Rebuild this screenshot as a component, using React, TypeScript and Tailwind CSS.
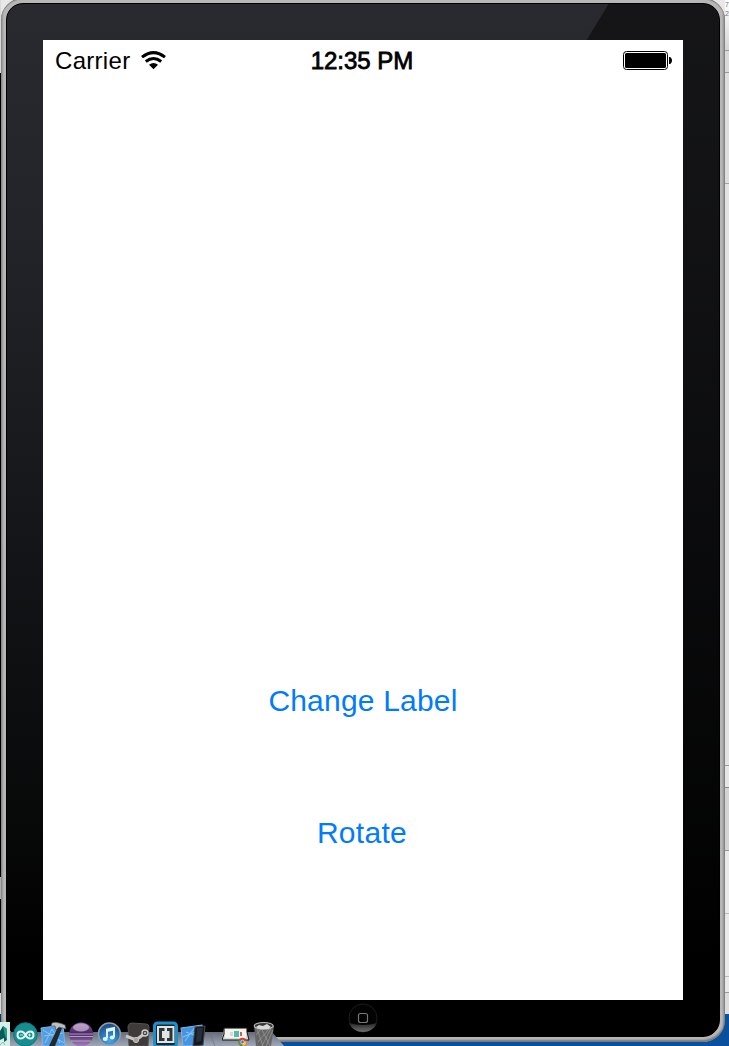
import type { ReactNode } from "react";

function StatusBar() {
  return (
    <header className="grid h-10 grid-cols-3 items-start pl-3 pr-[11px] pt-[1px] text-[24px] leading-10 text-black">
      <div className="flex items-start gap-[11px]">
        <span className="tracking-[0.3px]">Carrier</span>
        <svg className="mt-[10px] h-[19px] w-[25px]" viewBox="0 0 25 19" fill="none" stroke="black">
          <path d="M1 6.2Q12.5-3 24 6.2" strokeWidth="3" />
          <path d="M4.8 10.5Q12.5 4.5 20.2 10.5" strokeWidth="3" />
          <path d="M8 13.8Q12.5 10.2 17 13.8L12.5 18.3Z" fill="black" stroke="none" />
        </svg>
      </div>
      <span className="whitespace-nowrap pr-[3px] text-center [-webkit-text-stroke:0.8px_black]">12:35 PM</span>
      <svg className="mt-[10px] h-[19px] w-[49px] justify-self-end" viewBox="0 0 49 19">
        <rect x="0.5" y="0.5" width="44" height="18" rx="3" fill="white" stroke="black" />
        <rect x="2" y="2" width="41" height="15" rx="1.5" fill="black" />
        <path d="M46 6h1.2c1 1 1.8 2 1.8 3.5S48.2 12 47.2 13H46z" fill="black" />
      </svg>
    </header>
  );
}

function HomeButton() {
  return (
    <svg className="size-[30px]" viewBox="0 0 30 30">
      <defs>
        <linearGradient id="homeShine" x1="0" y1="0" x2="0" y2="1">
          <stop stopColor="#242424" />
          <stop offset="1" stopColor="#707070" />
        </linearGradient>
      </defs>
      <circle cx="15" cy="15" r="14" fill="#030303" stroke="#1c1c1c" />
      <path d="M1 20Q15 24 29 20C24 32 6 32 1 20Z" fill="url(#homeShine)" />
      <rect x="10.5" y="10.5" width="9" height="9" rx="2" fill="none" stroke="#777" strokeWidth="1.2" />
    </svg>
  );
}

function DockIcon({ width, children }: { width: string; children: ReactNode }) {
  return (
    <svg className={`h-[25px] shrink-0 ${width}`} viewBox="0 0 28 25" preserveAspectRatio="xMinYMin slice">
      {children}
    </svg>
  );
}

function Dock() {
  return (
    <div className="absolute bottom-0 left-0 h-[25px] w-[284px]">
      <svg className="absolute inset-0 h-[25px] w-[284px]" viewBox="0 0 284 25">
        <defs>
          <linearGradient id="shelf" x1="0" y1="0" x2="0" y2="1">
            <stop stopColor="#666b77" />
            <stop offset="1" stopColor="#a0a8b8" />
          </linearGradient>
        </defs>
        <path d="M0 11H272L284 25H0Z" fill="url(#shelf)" />
        <path d="M211 15L215 25" stroke="#606875" strokeDasharray="1 1" />
      </svg>
      <div className="relative flex">
        <DockIcon width="w-[12px]">
          <rect width="10" height="25" y="1" fill="#d7efeb" />
          <path d="M0 10L3 5L7 8V19L4 21V17L0 19Z" fill="#075d55" />
          <path d="M3 5L7 8V19L5 15Z" fill="#27998b" />
          <path d="M0 24L3 21L5 24" stroke="#8db9b2" fill="none" />
        </DockIcon>
        <DockIcon width="w-[28px]">
          <circle cx="13.4" cy="13.5" r="11.8" fill="#138e91" stroke="#0b797e" />
          <path d="M13.5 14C11 9 5.5 9.5 5.5 14s5.5 5 8 0 8-4.5 8 0-5.5 5-8 0Z" fill="none" stroke="#e4f5ef" strokeWidth="2" />
          <path d="M8 14h3M16 14h3M17.5 12.5v3" stroke="#c6efe5" />
        </DockIcon>
        <DockIcon width="w-[28px]">
          <path d="M1 7L23 4L25 25H3Z" fill="#529de2" stroke="#75b8f0" />
          <path d="M5 22L12 8L20 22M4 15L23 12M3 9L24 22" stroke="#86c4f5" fill="none" />
          <path d="M18 6L22 7L15 25H9Z" fill="#22282c" />
          <path d="M12 2Q16 0 25 4L26 8L19 6L16 9L15 5L11 5Z" fill="#bbc0c2" stroke="#4b5051" strokeWidth=".7" />
        </DockIcon>
        <DockIcon width="w-[28px]">
          <defs>
            <linearGradient id="eclipse" x1="0" y1="0" x2="0" y2="1">
              <stop stopColor="#8a5fa3" />
              <stop offset=".45" stopColor="#482663" />
              <stop offset="1" stopColor="#a583bd" />
            </linearGradient>
          </defs>
          <circle cx="13.2" cy="13.5" r="12" fill="url(#eclipse)" />
          <path d="M1.5 13H25M1.5 15.5H25M3 20H23" stroke="#d4bce0" strokeWidth="1" opacity=".75" />
          <ellipse cx="13" cy="6.5" rx="8" ry="4" fill="#e2cfe9" opacity=".6" />
        </DockIcon>
        <DockIcon width="w-[28px]">
          <defs>
            <radialGradient id="music" cx=".5" cy=".8" r=".8">
              <stop stopColor="#45a8e9" />
              <stop offset="1" stopColor="#194580" />
            </radialGradient>
          </defs>
          <circle cx="13.4" cy="13" r="11" fill="url(#music)" stroke="#909da9" strokeWidth="1.5" />
          <path d="M11 17V8.5L18 7V16" fill="none" stroke="#dcf4ff" strokeWidth="2" />
          <path d="M11 8.5L18 7V9.5L11 11Z" fill="#dcf4ff" />
          <ellipse cx="9.2" cy="18" rx="2.5" ry="2" fill="#dcf4ff" />
          <ellipse cx="16.2" cy="16.5" rx="2.4" ry="2" fill="#dcf4ff" />
        </DockIcon>
        <DockIcon width="w-[28px]">
          <path d="M4 5Q5 2 8 2L22 3Q25 3 25 6L24 25H5Z" fill="#3e3b3a" stroke="#56514f" />
          <path d="M2 15L12 19L20 13" stroke="#c7c6c3" strokeWidth="3" fill="none" />
          <circle cx="21" cy="12" r="3" fill="#4a4847" stroke="#d0cfcc" strokeWidth="1.3" />
          <circle cx="21" cy="12" r="1" fill="#d0cfcc" />
          <circle cx="12" cy="19" r="2.6" fill="#a5a29f" stroke="#c4c2bf" strokeWidth="1" />
        </DockIcon>
        <DockIcon width="w-[28px]">
          <rect x="2.5" y="2" width="22" height="23.5" rx="3" fill="#20262a" stroke="#1991cf" strokeWidth="3" />
          <rect x="5" y="5" width="17.5" height="17" fill="#e0e4e4" />
          <path d="M12.5 7H7V20H12.5V17H10V10H12.5ZM15 7H20.5V20H15V17H17.5V10H15Z" fill="#303537" />
        </DockIcon>
        <DockIcon width="w-[42px]">
          <g transform="scale(.667)">
            <path d="M1 7L22 4L24 24L3 25Z" fill="#4394e1" stroke="#79b9ef" />
            <path d="M5 20L15 6M6 11L22 17M3 16L20 9" stroke="#82c2f3" fill="none" />
            <path d="M15 6L25 5L23 24L13 25Z" fill="#15171c" stroke="#434750" />
            <path d="M17 7L23 7L21 20L16 21Z" fill="#282e38" />
          </g>
        </DockIcon>
        <DockIcon width="w-[28px]">
          <path d="M2 7H25V18H0Z" fill="#d5d8d3" />
          <path d="M2 7H25V11L27 19H0L2 13Z" fill="#d5d8d3" stroke="#151515" />
          <rect x="3" y="8" width="21" height="9" fill="#f4f4ef" />
          <path d="M12 10H17V16H12Z" fill="#54bca9" />
          <path d="M18 11H20V15H18Z" fill="#d65e4d" />
          <path d="M11 12H8M11 14H8" stroke="#b8c0bc" />
          <circle cx="20.5" cy="21" r="4.2" fill="#d63c2f" />
          <path d="M20.5 21L17 19A4.2 4.2 0 0 0 20.5 25Z" fill="#37a950" />
          <path d="M20.5 21L24.5 20A4.2 4.2 0 0 1 20.5 25Z" fill="#f1c52e" />
          <circle cx="20.5" cy="21" r="1.8" fill="#367bda" stroke="white" strokeWidth=".6" />
        </DockIcon>
        <DockIcon width="w-[28px]">
          <path d="M4 5L6 25H21L24 5Z" fill="#666" />
          <path d="M7 8L13 25M11 7L20 25M21 7L12 25M23 9L16 25M6 14L12 7M8 21L19 8" stroke="#a5a5a5" strokeWidth=".6" />
          <ellipse cx="13.7" cy="4.8" rx="9.5" ry="3.3" fill="#353535" stroke="#bcbcbc" strokeWidth="1.2" />
          <path d="M6 6L9 4L13 5L17 3L21 6L18 8L9 8Z" fill="#d7d7d7" />
        </DockIcon>
      </div>
    </div>
  );
}

function Desktop({ children }: { children: ReactNode }) {
  return (
    <div className="relative flex h-[1046px] w-[729px] overflow-hidden bg-[linear-gradient(#e8e8e8_0px,#e8e8e8_60px,#0b509c_60px)] font-['Liberation_Sans',Arial,sans-serif]">
      <div className="flex w-px shrink-0 flex-col bg-black">
        <div className="h-[73px] bg-[#d9d9dc]" />
        <div className="h-[804px]" />
        <div className="h-[22px] bg-[#adadad]" />
        <div className="h-[94px]" />
        <div className="h-[21px] bg-[#d9d9d9]" />
        <div className="flex-1 bg-[#0b3565]" />
      </div>
      {children}
      <div className="w-1 shrink-0">
        <div className="h-[50px] bg-linear-to-b from-white to-[#d5d5d5] text-[7px] leading-[9px] text-[#777]">
          <div>7</div>
          <div>2</div>
        </div>
        <div className="h-[23px] border-y border-[#999] bg-[#d9d9d9]" />
        <div className="h-[111px] border-b border-[#a3a3a3] bg-[#dedede]" />
        <div className="h-[582px] border-b border-[#999] bg-[#e3e3e3]" />
        <div className="h-[22px] border-b border-[#888] bg-[#e6e6e6]" />
        <div className="h-[63px] border-b border-[#999] bg-[#d4d4d4]" />
        <div className="h-[63px] border-b border-[#bbb] bg-[#e9e9e9]" />
        <div className="h-[63px] border-b border-[#bbb] bg-[#e9e9e9]" />
        <div className="h-[16px] border-b border-[#999] bg-[#e9e9e9]" />
        <div className="h-[21px] bg-[#ddd]" />
      </div>
    </div>
  );
}

export default function App() {
  return (
    <Desktop>
      <div className="-mt-[2px] h-[1044px] w-[724px] shrink-0 rounded-[22px] bg-[linear-gradient(90deg,#8b8b8b_0px,#b7b7b7_3px,#b7b7b7_719px,#b6b6b6_721px,#828282_724px)] p-[5px] shadow-[inset_0_1px_1px_#777,inset_0_-2px_2px_#777]">
        <div className="h-full rounded-[17px] border border-black bg-[linear-gradient(121.4deg,transparent_513px,rgba(0,0,0,0.5)_514px),linear-gradient(180deg,#292a2f_0%,#222328_24%,#131417_54%,#080909_78%,#000_92%)] px-9 pt-9">
          <main className="h-[960px] w-[640px] bg-white">
            <StatusBar />
            <div className="flex flex-col items-center pt-[601px] text-[30px] leading-10 text-[#007aff]">
              <button className="h-10 tracking-[0.2px]">Change Label</button>
              <button className="mt-[92px] h-10 pr-[2px] tracking-[0.3px]">Rotate</button>
            </div>
          </main>
          <div className="flex justify-center pr-px pt-[3px]">
            <HomeButton />
          </div>
        </div>
      </div>
      <Dock />
    </Desktop>
  );
}
